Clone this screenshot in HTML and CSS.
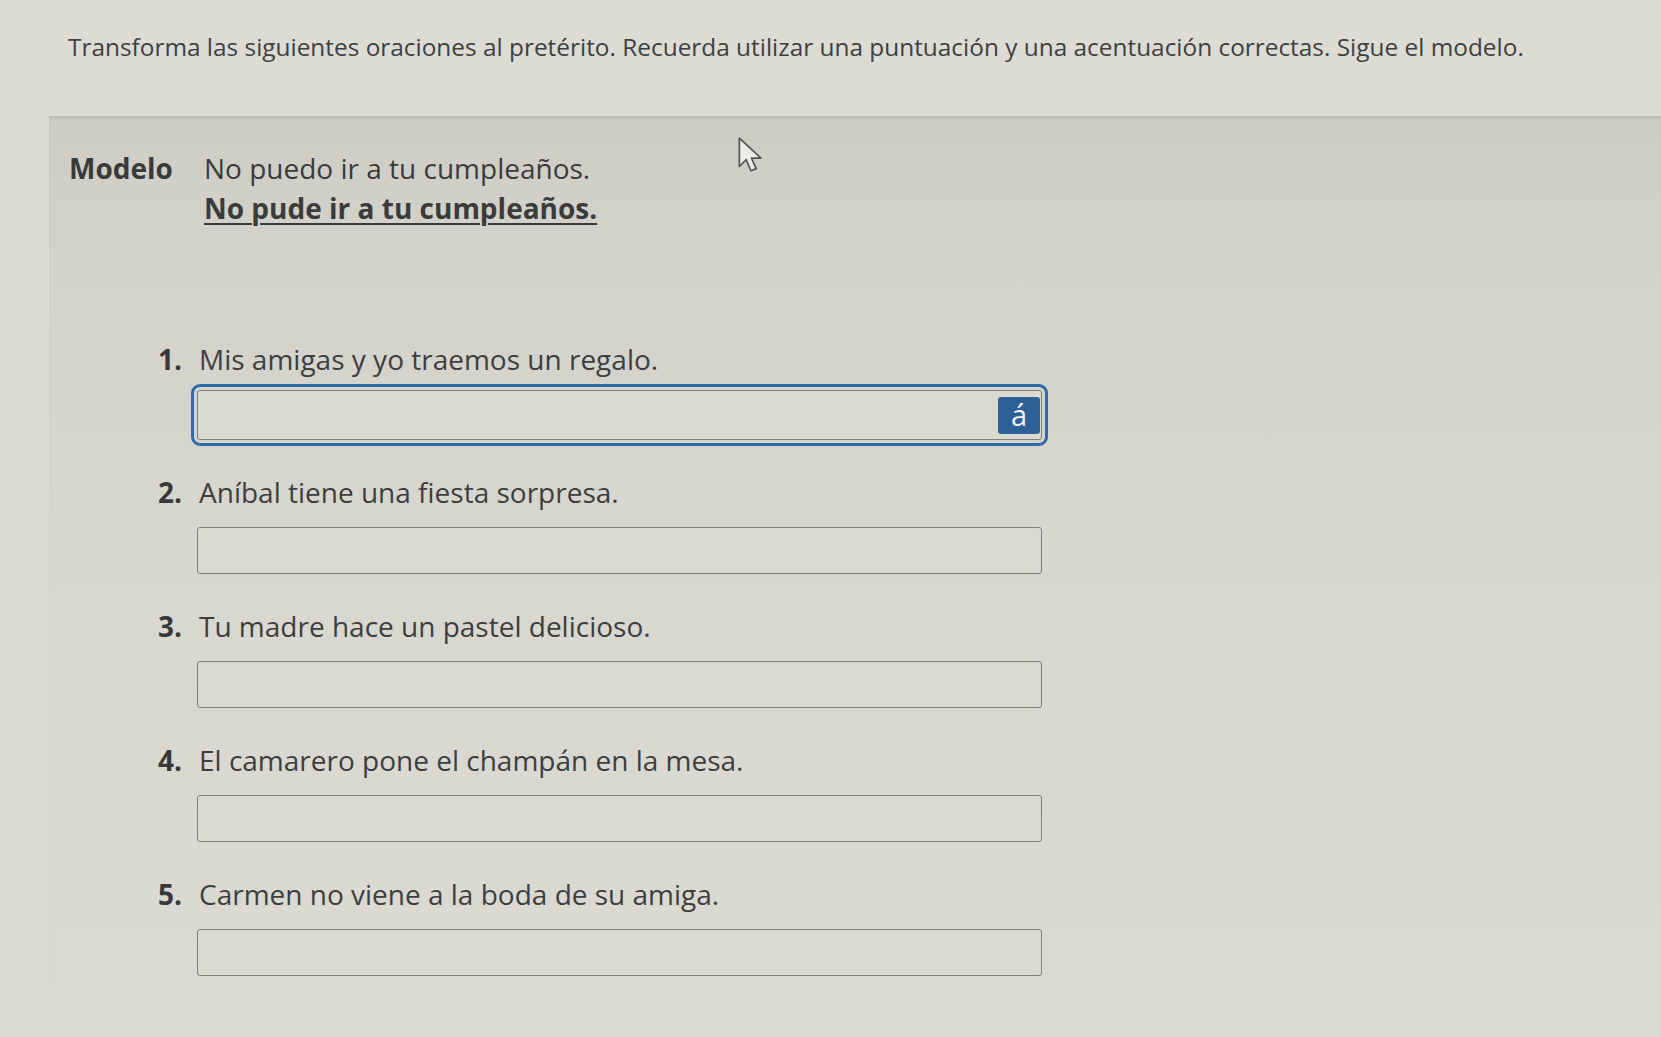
FILE: index.html
```html
<!DOCTYPE html>
<html lang="es">
<head>
    <meta charset="UTF-8">
    <title>Pretérito</title>
    <link rel="stylesheet" href="styles.css">
</head>
<body>

    <p class="intro">Transforma las siguientes oraciones al pretérito. Recuerda utilizar una puntuación y una acentuación correctas. Sigue el modelo.</p>

    <div class="exercise">
        <div class="model">
            <span class="model__label">Modelo</span>
            <div class="model__lines">
                <span>No puedo ir a tu cumpleaños.</span>
                <span class="model__answer">No pude ir a tu cumpleaños.</span>
            </div>
        </div>

        <ol class="items">
            <li class="item">
                <div class="item__prompt"><span class="item__num">1.</span>Mis amigas y yo traemos un regalo.</div>
                <div class="item__field is-focused">
                    <input class="item__input" type="text">
                    <span class="accent-btn">á</span>
                </div>
            </li>
            <li class="item">
                <div class="item__prompt"><span class="item__num">2.</span>Aníbal tiene una fiesta sorpresa.</div>
                <div class="item__field">
                    <input class="item__input" type="text">
                </div>
            </li>
            <li class="item">
                <div class="item__prompt"><span class="item__num">3.</span>Tu madre hace un pastel delicioso.</div>
                <div class="item__field">
                    <input class="item__input" type="text">
                </div>
            </li>
            <li class="item">
                <div class="item__prompt"><span class="item__num">4.</span>El camarero pone el champán en la mesa.</div>
                <div class="item__field">
                    <input class="item__input" type="text">
                </div>
            </li>
            <li class="item">
                <div class="item__prompt"><span class="item__num">5.</span>Carmen no viene a la boda de su amiga.</div>
                <div class="item__field">
                    <input class="item__input" type="text">
                </div>
            </li>
        </ol>

        <!-- mouse pointer over the panel -->
        <svg class="pointer" width="30" height="40" viewBox="0 0 28 38">
            <path d="M2 2 L2 29 L8.5 22.5 L13 33 L18 31 L13.5 21 L22.5 21 Z" fill="#ecece6" stroke="#555" stroke-width="1.6" stroke-linejoin="round"/>
        </svg>
    </div>

</body>
</html>
```

FILE: styles.css
```css
body {
    margin: 0;
    background: #dcdcd5;
    font-family: "Open Sans", "DejaVu Sans", sans-serif;
    color: #3b3b3b;
    height: 1037px;
    overflow: hidden;
}

/* Instructions */
.intro {
    margin: 0;
    padding: 30px 0 0 68px;
    font-size: 24.4px;
    line-height: 34px;
    color: #404040;
}

/* Grey panel */
.exercise {
    position: relative;
    margin: 52px 0 0 49px;
    padding: 33px 0 60px 20px;
    min-height: 900px;
    background: linear-gradient(180deg, #cdcdc5 0, #d2d2ca 120px, #d8d8d0 500px, #dbdbd3 100%);
    box-shadow: inset 0 3px 4px -2px rgba(0, 0, 0, 0.14);
}

/* Modelo */
.model {
    display: flex;
    font-size: 28px;
    line-height: 38px;
}

.model__label {
    width: 135px;
    font-weight: 700;
    color: #3a3a3a;
}

.model__lines {
    display: flex;
    flex-direction: column;
    gap: 2px;
}

.model__answer {
    font-weight: 700;
    text-decoration: underline;
    text-underline-offset: 4px;
    text-decoration-thickness: 2px;
}

/* Numbered items */
.items {
    list-style: none;
    margin: 113px 0 0;
    padding: 0 0 0 89px;
}

.item {
    margin-bottom: 33px;
}

.item__prompt {
    font-size: 28px;
    line-height: 38px;
    color: #3e3e3e;
}

.item__num {
    display: inline-block;
    width: 41px;
    font-weight: 700;
    color: #383838;
}

.item__field {
    position: relative;
    display: flex;
    align-items: center;
    margin: 16px 0 0 39px;
    width: 845px;
}

.item__input {
    flex: 1;
    height: 47px;
    box-sizing: border-box;
    border: 1.5px solid #7e7e7a;
    border-radius: 3px;
    background: #dadad3;
    font: inherit;
}

.item__field.is-focused {
    margin-top: 12px;
}

.item__field.is-focused .item__input {
    height: 50px;
    outline: 3px solid #2f6aab;
    outline-offset: 3px;
}

/* Accent key */
.accent-btn {
    position: absolute;
    right: 2px;
    top: 7px;
    width: 42px;
    height: 37px;
    border-radius: 3px;
    background: #2d6198;
    color: #f2f2f2;
    font-size: 29px;
    line-height: 35px;
    text-align: center;
}

.pointer {
    position: absolute;
    left: 688px;
    top: 20px;
}
```
